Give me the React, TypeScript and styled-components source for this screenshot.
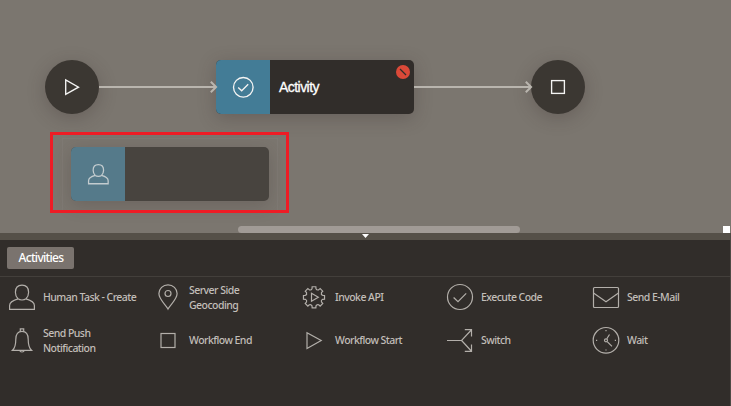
import React from "react";
import styled, { createGlobalStyle } from "styled-components";

const GlobalStyle = createGlobalStyle`
  * { box-sizing: border-box; }
  body {
    margin: 0;
    overflow: hidden;
    background: #312d2a;
    font-family: "Open Sans", "Noto Sans", sans-serif;
  }
`;

const Page = styled.div`
  width: 731px;
  height: 406px;
  display: flex;
  flex-direction: column;
  border-right: 1px solid #4e4a45;
`;

const Canvas = styled.main`
  position: relative;
  flex: 0 0 233px;
  margin-right: -1px;
  overflow: hidden;
  background: #7b766f;
`;

const CircleNode = styled.div<{ $x: number }>`
  position: absolute;
  left: ${(p) => p.$x}px;
  top: 60px;
  width: 54px;
  height: 54px;
  border-radius: 50%;
  background: #3b3732;
  box-shadow: 0 4px 18px rgba(60, 48, 46, 0.3);
`;

const TaskNode = styled.div<{ $x: number; $y: number; $ghost?: boolean }>`
  position: absolute;
  left: ${(p) => p.$x}px;
  top: ${(p) => p.$y}px;
  width: 198px;
  height: 54px;
  display: flex;
  align-items: center;
  border-radius: 5px;
  background: ${(p) => (p.$ghost ? "#48443f" : "#312d2a")};
  box-shadow: 0 4px 18px rgba(60, 48, 46, ${(p) => (p.$ghost ? 0.24 : 0.3)});
`;

const NodeIcon = styled.div<{ $ghost?: boolean }>`
  width: 54px;
  height: 54px;
  border-radius: 5px 0 0 5px;
  background: ${(p) => (p.$ghost ? "#557a8a" : "#437c96")};
`;

const NodeTitle = styled.span`
  margin: -1px 0 0 9px;
  color: #fff;
  font: 14px/18px "Liberation Sans", sans-serif;
  letter-spacing: -0.55px;
  -webkit-text-stroke: 0.3px #fff;
`;

const ErrorBadge = styled.svg`
  position: absolute;
  top: 5px;
  right: 4px;
`;

const Connector = styled.svg<{ $x: number }>`
  position: absolute;
  left: ${(p) => p.$x}px;
  top: 79px;
  z-index: 1;
`;

const Highlight = styled.div`
  position: absolute;
  left: 50px;
  top: 132px;
  width: 239px;
  height: 81px;
  border: 3px solid #ee1c25;
`;

const DropOutline = styled.div`
  position: absolute;
  left: 62px;
  top: 138px;
  width: 216px;
  height: 72px;
  border: 1px solid #7f7a74;
  border-bottom: 0;
`;

const ScrollThumb = styled.div`
  position: absolute;
  left: 238px;
  bottom: 0;
  width: 282px;
  height: 7px;
  border-radius: 4px;
  background: #a19b96;
`;

const ScrollCorner = styled.div`
  position: absolute;
  right: 1px;
  bottom: 0;
  width: 7px;
  height: 7px;
  background: #fff;
`;

const Splitter = styled.div`
  flex: 0 0 7px;
  display: flex;
  justify-content: center;
  background: #555048;
`;

const Panel = styled.section`
  flex: 1;
  background: #312d2a;
`;

const TabBar = styled.div`
  height: 37px;
  padding: 7px 7px 0;
  border-bottom: 1px solid #433f3b;
`;

const Tab = styled.button`
  display: block;
  width: 67px;
  height: 22px;
  padding: 0 0 1px 1px;
  border: 0;
  border-radius: 2px;
  background: #7a736e;
  color: #fff;
  font: 500 12px/20px "Noto Sans", sans-serif;
  letter-spacing: -0.68px;
  white-space: nowrap;
`;

const Palette = styled.div`
  display: grid;
  grid-template-columns: repeat(5, 146px);
  grid-template-rows: 40px 46px;
  padding-left: 8px;
  margin-right: -20px;
`;

const PaletteItem = styled.div`
  display: flex;
  align-items: center;
  gap: 7px;
`;

const ItemLabel = styled.span<{ $single: boolean }>`
  width: 104px;
  margin-top: ${(p) => (p.$single ? 0 : 2)}px;
  color: #c2beb9;
  font: 500 10.5px/15px "Noto Sans", sans-serif;
  letter-spacing: -0.54px;
  white-space: pre-line;
`;

const Glyph = styled.svg<{ $bright?: boolean }>`
  flex: none;
  display: block;
  fill: none;
  stroke: ${(p) => (p.$bright ? "#f4f4f3" : "#b3afaa")};
  stroke-width: ${(p) => (p.$bright ? 1.35 : 1.2)};
`;

const gearPath = (() => {
  const parts: string[] = [];
  const at = (r: number, deg: number) => {
    const a = (deg * Math.PI) / 180;
    return `${(14 + r * Math.cos(a)).toFixed(2)} ${(14.3 + r * Math.sin(a)).toFixed(2)}`;
  };
  for (let i = 0; i < 8; i++) {
    const c = i * 45;
    parts.push(`${i ? "L" : "M"}${at(8.8, c - 13)} L${at(10.7, c - 10)} L${at(10.7, c + 10)} L${at(8.8, c + 13)}`);
    parts.push(`Q${at(7.4, c + 22.5)} ${at(8.8, c + 32)}`);
  }
  return parts.join(" ") + "Z";
})();

const shapes: Record<string, React.ReactNode> = {
  human: (
    <>
      <path d="M10 15.8C8.4 14.3 7.4 12 7.4 9.3C7.4 4.8 9.8 2.1 14 2.1S20.6 4.8 20.6 9.3C20.6 12 19.6 14.3 18 15.8C16 17.4 12 17.4 10 15.8Z" />
      <path d="M10 15.8C5 17.2 1.6 18.9 1.6 22.6V26.4H26.4V22.6C26.4 18.9 23 17.2 18 15.8" />
    </>
  ),
  pin: (
    <>
      <path d="M14 26.1C11.8 21.6 4.9 16.6 4.9 10.6A9.1 8.8 0 0 1 23.1 10.6C23.1 16.6 16.2 21.6 14 26.1Z" />
      <circle cx="14" cy="10.5" r="3" />
    </>
  ),
  gear: (
    <>
      <path d={gearPath} />
      <path d="M11.5 10.3V18.3L18.3 14.3Z" />
    </>
  ),
  check: (
    <>
      <circle cx="14" cy="14" r="12.5" />
      <path d="M7.6 14.5L12 18.7L20.2 10.4" />
    </>
  ),
  mail: (
    <>
      <rect x="1.5" y="4.5" width="25" height="20" rx="1" />
      <path d="M1.5 10L14 18.7L26.5 10" />
    </>
  ),
  bell: (
    <>
      <path d="M4.5 24.3C7.4 21.7 7.8 18.8 7.8 13.3C7.8 8 10 5.3 14 5.3S20.2 8 20.2 13.3C20.2 18.8 20.6 21.7 23.5 24.3Z" />
      <path d="M12.3 5V2.9H15.7V5M11.8 24.5C12 26.5 16 26.5 16.2 24.5" />
    </>
  ),
  square: <rect x="7" y="7.5" width="14" height="14" />,
  play: <path d="M7 6.7V22.4L21.2 14.5Z" />,
  branch: <path d="M1 14.5H15.6L25.3 4M18.8 3.6H25.5V10.4M15.6 14.5L25.3 25M18.8 25.4H25.5V18.5" />,
  clock: (
    <>
      <circle cx="14" cy="14.3" r="12.8" />
      <circle cx="14" cy="14.3" r="1.5" />
      <path d="M14.8 12.8L17.5 8.5M15.2 15.6L20 20.4M14 4V5.2M14 23.4V24.6M4 14.3H5.2M22.8 14.3H24" />
    </>
  ),
};

const Icon = ({ name }: { name: string }) => (
  <Glyph width="28" height="28" viewBox="0 0 28 28">{shapes[name]}</Glyph>
);

const Arrow = ({ x }: { x: number }) => (
  <Connector $x={x} width="120" height="16" fill="none" stroke="#b9b5ae" strokeWidth="2">
    <path d="M0 8H117M111.8 2.7L117.1 8L111.8 13.3" />
  </Connector>
);

const activities = [
  ["human", "Human Task - Create"],
  ["pin", "Server Side\nGeocoding"],
  ["gear", "Invoke API"],
  ["check", "Execute Code"],
  ["mail", "Send E-Mail"],
  ["bell", "Send Push\nNotification"],
  ["square", "Workflow End"],
  ["play", "Workflow Start"],
  ["branch", "Switch"],
  ["clock", "Wait"],
];

export default function App() {
  return (
    <Page>
      <GlobalStyle />
      <Canvas>
        <CircleNode $x={45}>
          <Glyph $bright width="54" height="54"><path d="M20.7 20V34.3L33.5 27.2Z" /></Glyph>
        </CircleNode>
        <Arrow x={99} />
        <TaskNode $x={216} $y={60}>
          <NodeIcon>
            <Glyph $bright width="54" height="54">
              <circle cx="27.3" cy="27.3" r="9.8" />
              <path d="M22.2 27.5L25.7 30.8L32.2 24.3" />
            </Glyph>
          </NodeIcon>
          <NodeTitle>Activity</NodeTitle>
          <ErrorBadge width="14" height="14">
            <circle cx="7" cy="7" r="7" fill="#db4938" />
            <path d="M4 4L10 10" stroke="#312d2a" strokeWidth="1.2" />
          </ErrorBadge>
        </TaskNode>
        <Arrow x={414} />
        <CircleNode $x={531}>
          <Glyph $bright width="54" height="54"><rect x="20.6" y="20.6" width="12.8" height="12.8" /></Glyph>
        </CircleNode>
        <DropOutline />
        <TaskNode $x={71} $y={147} $ghost>
          <NodeIcon $ghost>
            <Glyph width="54" height="54">
              <g transform="translate(16.3 15.9) scale(0.79)" stroke="#c3cccf" strokeWidth="1.6">{shapes.human}</g>
            </Glyph>
          </NodeIcon>
        </TaskNode>
        <Highlight />
        <ScrollThumb />
        <ScrollCorner />
      </Canvas>
      <Splitter>
        <svg width="7" height="7"><path d="M0 1H7L3.5 5Z" fill="#fff" /></svg>
      </Splitter>
      <Panel>
        <TabBar><Tab>Activities</Tab></TabBar>
        <Palette>
          {activities.map(([icon, label]) => (
            <PaletteItem key={label}>
              <Icon name={icon} />
              <ItemLabel $single={!label.includes("\n")}>{label}</ItemLabel>
            </PaletteItem>
          ))}
        </Palette>
      </Panel>
    </Page>
  );
}
